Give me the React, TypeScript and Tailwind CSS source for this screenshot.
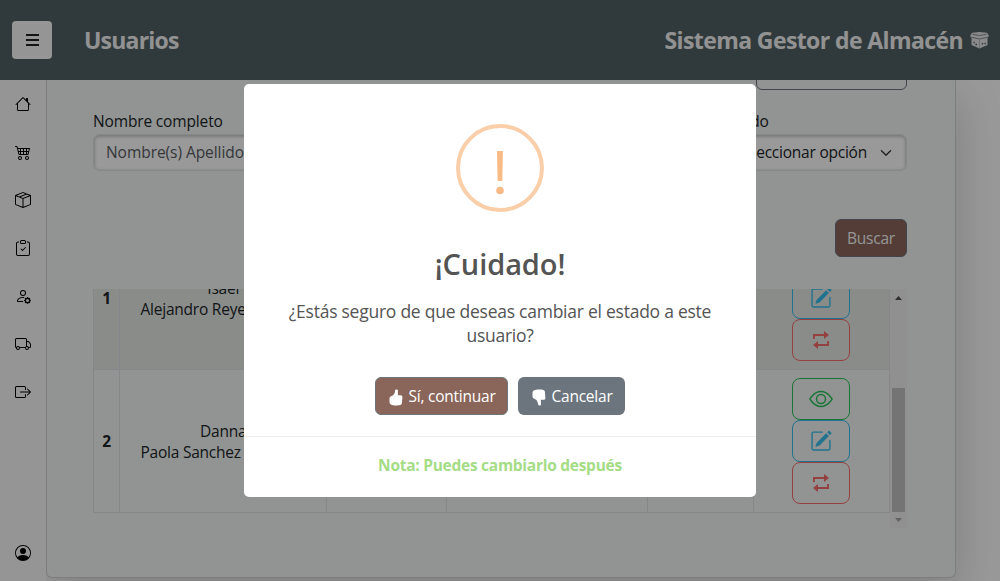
import type { ReactNode } from "react";
import type { IconType } from "react-icons";
import {
  BsHouse,
  BsCart4,
  BsBoxSeam,
  BsClipboardCheck,
  BsPersonGear,
  BsTruck,
  BsBoxArrowRight,
  BsPersonCircle,
  BsEye,
  BsPencilSquare,
  BsChevronDown,
} from "react-icons/bs";

const navItems: IconType[] = [BsHouse, BsCart4, BsBoxSeam, BsClipboardCheck, BsPersonGear, BsTruck, BsBoxArrowRight];

function OpenBox() {
  return (
    <svg width="19" height="17" viewBox="0 0 19 17" fill="none">
      <path d="M2 .8 9.500 0 17 .8 19 4l-1.500 1.500V13L9.500 16.500 1.500 13V5.500L0 4z" fill="#e4e4e4" />
      <path d="M2.500 2.300 9.500 3.500l7-1.200M1.500 5.300l8 1.700 8-1.700" stroke="#7d898b" strokeWidth=".9" />
      <path d="M9.500 7v9" stroke="#a9b0b1" strokeWidth=".7" />
      <path d="M3.500 10.500h1.200M5.500 12.500h1.500M12 12.500l1-1.500M14.500 11.500h1.200" stroke="#506164" strokeWidth="1.300" />
    </svg>
  );
}

function Swap() {
  return (
    <svg width="18" height="20" viewBox="0 0 18 20" fill="currentColor">
      <path d="M1 9V4h11V1l5 4.100-5 4V6H2.900v3z" />
      <path d="M17 11v5H6v3l-5-4.100 5-4V14h9.100v-3z" />
    </svg>
  );
}

function Thumb({ down = false }: { down?: boolean }) {
  return (
    <svg width="14" height="17" viewBox="0 0 14 17" fill="#fff" className={down ? "-scale-y-100" : ""}>
      <path d="M7 .6C8 .1 9 .8 9 2l-.2 4.200h2.700c1.300 0 2 .8 1.900 1.900l-.5 6c-.1 1.300-1 2.100-2.400 2.200-2.300.2-5 .2-7.500-.4C1.300 15.500.5 14.500.5 13V9.700C.5 8.200 1.400 7.300 2.800 7 4.700 6.200 5.700 4.600 6 2.200 6.100 1.400 6.300.9 7 .6z" />
    </svg>
  );
}

function Action({ color, children }: { color: string; children: ReactNode }) {
  return (
    <button className={`flex h-[42px] w-[58px] items-center justify-center rounded-lg border ${color}`}>{children}</button>
  );
}

function Row({ n, first, second, striped }: { n: number; first: string; second: string; striped?: boolean }) {
  return (
    <div
      className={`grid h-[143px] shrink-0 grid-cols-[27px_207px_120px_201px_106px_136px] border-b border-[#dee2e6] ${striped ? "bg-[#e6e9e6]" : ""}`}
    >
      <div className="flex items-center justify-center border-x border-[#dee2e6] pt-0.5 font-bold">{n}</div>
      <div className="flex flex-col justify-center border-r border-[#dee2e6] pt-0.5 pl-[20.5px] leading-[21px]">
        <span className="pr-[20px] text-center">{first}</span>
        <span className="whitespace-nowrap">{second}</span>
      </div>
      <div className="border-r border-[#dee2e6]" />
      <div className="border-r border-[#dee2e6]" />
      <div className="border-r border-[#dee2e6]" />
      <div className="flex flex-col items-center justify-center border-r border-[#dee2e6] pr-px">
        <Action color="border-[#2bc45c] text-[#2bc45c]">
          <BsEye size={24} />
        </Action>
        <Action color="border-[#36bfee] text-[#36bfee]">
          <BsPencilSquare size={22} />
        </Action>
        <Action color="border-[#f76c6c] text-[#f76c6c]">
          <Swap />
        </Action>
      </div>
    </div>
  );
}

const field =
  "flex h-[37px] items-center rounded-md border border-[#dee2e6] bg-white px-3 shadow-[inset_0_1px_3px_1px_rgba(0,0,0,0.2)]";

export default function App() {
  return (
    <div className="relative flex h-[581px] w-[1000px] flex-col overflow-hidden bg-white font-['Open_Sans','Noto_Sans',sans-serif] text-[15.5px] tracking-[-0.23px] text-[#212529]">
      <header className="z-10 flex h-20 shrink-0 items-center bg-[#506164] pr-[11px] pl-3 text-[23px] font-bold tracking-[-0.6px] text-[#f4f4f4]">
        <button className="flex h-[38px] w-10 flex-col items-center justify-center gap-[3px] rounded bg-[#f8f8f8]">
          <span className="h-0.5 w-[13px] bg-[#222]" />
          <span className="h-0.5 w-[13px] bg-[#222]" />
          <span className="h-0.5 w-[13px] bg-[#222]" />
        </button>
        <h1 className="ml-[32px] grow pt-px tracking-[-0.8px]">Usuarios</h1>
        <span className="mr-[7px] pt-px">Sistema Gestor de Almacén</span>
        <OpenBox />
      </header>

      <div className="flex min-h-0 grow">
        <nav className="z-10 flex w-[46px] shrink-0 flex-col items-center gap-8 bg-[#f8f8f8] pt-4 pb-5 text-black">
          {navItems.map((Icon, i) => (
            <Icon key={i} size={16} className="shrink-0" />
          ))}
          <BsPersonCircle size={16} className="mt-auto shrink-0" />
        </nav>

        <main className="flex h-[498px] w-[910px] shrink-0 flex-col rounded-b-md border border-t-0 border-[#cfd1d1] bg-[#f2f7f4] pr-[48px] pl-[46px] shadow-[0_16px_48px_rgba(0,0,0,0.175)]">
          <div className="flex h-[10px] shrink-0 items-end justify-end">
            <button className="flex h-[38px] w-[151px] shrink-0 items-center justify-center self-end rounded-md border border-[#6c757d] tracking-[0px] text-[#6c757d]">
              Agregar usuario
            </button>
          </div>

          <div className="mt-[19px] flex shrink-0 justify-between">
            <div className="w-[196px]">
              <div className="h-[25px] leading-6 tracking-[-0.15px]">Nombre completo</div>
              <div className={`${field} whitespace-nowrap tracking-[-0.05px] text-[#595c5f]`}>Nombre(s) Apellido(s)</div>
            </div>
            <div className="w-[196px]">
              <div className="h-[25px] pl-[10px] leading-6">Estado</div>
              <div className={`${field} justify-end gap-[13px]`}>
                <span className="whitespace-nowrap">Seleccionar opción</span>
                <BsChevronDown size={12} strokeWidth={1} className="mr-[2px]" />
              </div>
            </div>
          </div>

          <div className="mt-12 flex shrink-0 justify-end">
            <button className="h-[38px] w-[72px] rounded-md border border-[#6c757d] bg-[#8a665a] pt-0.5 text-[#f8f8f8]">
              Buscar
            </button>
          </div>

          <div className="mt-8 flex h-[239px] shrink-0">
            <div className="flex w-[797px] flex-col justify-end overflow-hidden pb-[15px]">
              <Row n={1} first="Isael" second="Alejandro Reyes" striped />
              <Row n={2} first="Danna" second="Paola Sanchez" />
            </div>
            <div className="flex w-[17px] flex-col items-center bg-[#f1f1f1]">
              <svg width="17" height="17" viewBox="0 0 17 17">
                <path d="M5 11h7L8.500 7z" fill="#505050" />
              </svg>
              <div className="mt-[82px] h-[124px] w-[13px] bg-[#c1c1c1]" />
              <svg width="17" height="16" viewBox="0 0 17 16">
                <path d="M5 6h7l-3.500 4z" fill="#a3a3a3" />
              </svg>
            </div>
          </div>
        </main>
      </div>

      <div className="absolute inset-0 z-20 flex items-center justify-center bg-black/40">
        <div className="flex h-[413px] w-[512px] flex-col items-center rounded-[5px] bg-white pt-10 text-[#545454]">
          <svg width="88" height="88" viewBox="0 0 88 88" className="shrink-0">
            <circle cx="44" cy="44" r="42" fill="none" stroke="#facea8" strokeWidth="4" />
            <path d="M41 27h5.900l-.6 30h-4.700z" fill="#f8bb86" />
            <circle cx="44" cy="66.500" r="3.800" fill="#f8bb86" />
          </svg>
          <h2 className="mt-[34px] h-9 text-[29px] leading-9 font-semibold tracking-[-0.1px]">¡Cuidado!</h2>
          <p className="mt-[17px] w-[440px] text-center text-[17.5px] leading-6 tracking-[-0.25px]">
            ¿Estás seguro de que deseas cambiar el estado a este usuario?
          </p>
          <div className="mt-[30px] flex gap-[10px] text-white">
            <button className="flex h-[38px] w-[133px] items-center justify-center gap-[5px] rounded-md border border-[#6c757d] bg-[#8a665a] pt-0.5 pl-0.5 whitespace-nowrap">
              <span className="mt-px">
                <Thumb />
              </span>
              Sí, continuar
            </button>
            <button className="flex h-[38px] w-[107px] items-center justify-center gap-[5px] rounded-md bg-[#6c757d] pt-0.5 pl-0.5 whitespace-nowrap">
              <span className="mt-px">
                <Thumb down />
              </span>
              Cancelar
            </button>
          </div>
          <div className="mt-[21px] w-full border-t border-[#eee] pt-[16px] text-center leading-6 font-bold tracking-[-0.27px] text-[#a5dc86]">
            Nota: Puedes cambiarlo después
          </div>
        </div>
      </div>
    </div>
  );
}
